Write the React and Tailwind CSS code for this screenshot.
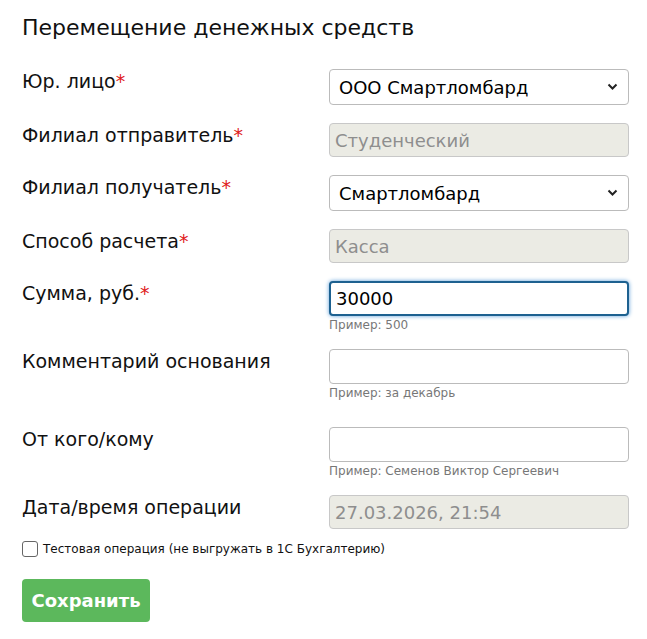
export default function App() {
  const f = { fontFamily: '"DejaVu Sans", Verdana, sans-serif' };
  const Star = () => <span className="text-[#e02020]">*</span>;
  const Label = ({ children }) => <div className="w-[307px] text-[19px] leading-[24px] text-[#111]">{children}</div>;
  const Sel = ({ v }) => (
    <div className="w-[300px] h-[36px] border border-[#bbb] rounded-[4px] bg-white flex items-center justify-between pl-[9px] pr-[10px] text-[18px] text-black">
      <span>{v}</span>
      <svg width="11" height="8" viewBox="0 0 11 8"><path d="M1.5 1.5 5.5 5.5 9.5 1.5" stroke="#222" strokeWidth="2" fill="none" /></svg>
    </div>
  );
  const Dis = ({ v }) => (
    <div className="w-[300px] h-[34px] border border-[#c8c8c8] rounded-[4px] bg-[#ebebe4] flex items-center pl-[5px] text-[18px] text-[#8e8e8e]">{v}</div>
  );
  const Inp = ({ v, focus }) => (
    <div className={`w-[300px] h-[35px] rounded-[4px] bg-white flex items-center pl-[5px] text-[18px] text-black ${focus ? "border-2 border-[#1d6190] shadow-[0_0_4px_#5b9dd9]" : "border border-[#bbb]"}`}>{v}</div>
  );
  const Hint = ({ children }) => <div className="text-[12px] text-[#777] mt-[2px] leading-[14px]">{children}</div>;
  return (
    <div style={f} className="w-[647px] h-[639px] bg-white pl-[22px] pt-[14px]">
      <h1 className="text-[22px] leading-[28px] text-[#111] mb-[27px]">Перемещение денежных средств</h1>
      <div className="flex h-[54px]"><Label>Юр. лицо<Star /></Label><Sel v="ООО Смартломбард" /></div>
      <div className="flex h-[52px]"><Label>Филиал отправитель<Star /></Label><Dis v="Студенческий" /></div>
      <div className="flex h-[54px]"><Label>Филиал получатель<Star /></Label><Sel v="Смартломбард" /></div>
      <div className="flex h-[52px]"><Label>Способ расчета<Star /></Label><Dis v="Касса" /></div>
      <div className="flex h-[68px]"><Label>Сумма, руб.<Star /></Label><div><Inp v="30000" focus /><Hint>Пример: 500</Hint></div></div>
      <div className="flex h-[78px]"><Label>Комментарий основания</Label><div><Inp /><Hint>Пример: за декабрь</Hint></div></div>
      <div className="flex h-[68px]"><Label>От кого/кому</Label><div><Inp /><Hint>Пример: Семенов Виктор Сергеевич</Hint></div></div>
      <div className="flex h-[45px]"><Label>Дата/время операции</Label><Dis v="27.03.2026, 21:54" /></div>
      <label className="flex items-center gap-[5px] text-[12px] text-[#111]">
        <span className="w-[16px] h-[16px] border border-[#666] rounded-[3px] bg-white inline-block" />
        Тестовая операция (не выгружать в 1С Бухгалтерию)
      </label>
      <button className="mt-[21px] w-[128px] h-[43px] bg-[#5cb85c] rounded-[4px] text-white font-bold text-[18px]">Сохранить</button>
    </div>
  );
}
